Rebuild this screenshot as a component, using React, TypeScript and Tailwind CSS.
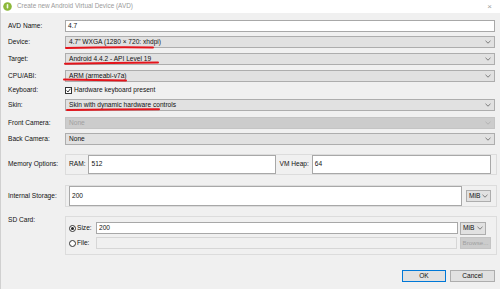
import React from 'react';

const Chevron = ({ color = '#707070' }: { color?: string }) => (
  <svg width="6" height="4" viewBox="0 0 6 4" className="shrink-0">
    <polyline points="0.5,0.8 3,3.2 5.5,0.8" fill="none" stroke={color} strokeWidth="0.9" />
  </svg>
);

function Combo({ value, disabled = false }: { value: string; disabled?: boolean }) {
  return (
    <div
      className={
        disabled
          ? 'flex-1 h-full flex items-center justify-between pl-[3px] pr-[3px] border border-[#c4c4c4] bg-[#cccccc] text-[#a0a0a0]'
          : 'flex-1 h-full flex items-center justify-between pl-[3px] pr-[3px] border border-[#adadad] bg-[#e1e1e1] text-[#111]'
      }
    >
      <span>{value}</span>
      <Chevron color={disabled ? '#b0b0b0' : '#707070'} />
    </div>
  );
}

function Field({ value, className = '' }: { value: string; className?: string }) {
  return (
    <div className={`h-full flex items-center pl-[2px] border border-[#a8a8a8] bg-white text-[#111] ${className}`}>
      {value}
    </div>
  );
}

function Row({ label, children, className = '' }: { label: string; children: React.ReactNode; className?: string }) {
  return (
    <div className={`flex items-center h-[12px] pr-[5px] ${className}`}>
      <div className="w-[64px] pl-[7px] text-[#111]">{label}</div>
      {children}
    </div>
  );
}

export default function App() {
  return (
    <div
      className="relative w-[500px] h-[289px] overflow-hidden bg-[#f0f0f0] text-[6.6px] leading-none border-l border-[#d0d0d0]"
      style={{ fontFamily: '"Liberation Sans", Arial, sans-serif' }}
    >
      {/* title bar */}
      <div className="h-[13px] bg-white flex items-center pl-[2px] pr-[8px]">
        <svg width="9" height="9" viewBox="0 0 9 9" className="shrink-0">
          <circle cx="4.5" cy="4.5" r="4.3" fill="#8cb83a" />
          <rect x="3.7" y="2" width="1.6" height="4.6" rx="0.8" fill="#f4f9e8" />
        </svg>
        <span className="ml-[5px] text-[6.4px] text-[#9a9a9a]">Create new Android Virtual Device (AVD)</span>
        <span className="ml-auto text-[8px] text-[#a0a0a0]">×</span>
      </div>

      <Row label="AVD Name:" className="mt-[7px]">
        <Field value="4.7" className="flex-1" />
      </Row>
      <Row label="Device:" className="mt-[4px]">
        <Combo value={'4.7" WXGA (1280 × 720: xhdpi)'} />
      </Row>
      <Row label="Target:" className="mt-[5px]">
        <Combo value="Android 4.4.2 - API Level 19" />
      </Row>
      <Row label="CPU/ABI:" className="mt-[5px]">
        <Combo value="ARM (armeabi-v7a)" />
      </Row>
      <div className="flex items-center h-[9px] mt-[4px]">
        <div className="w-[64px] pl-[7px] text-[#111]">Keyboard:</div>
        <div className="w-[7px] h-[7px] border border-[#333] bg-white flex items-center justify-center">
          <svg width="5" height="5" viewBox="0 0 5 5">
            <polyline points="0.6,2.5 2,4 4.4,0.8" fill="none" stroke="#222" strokeWidth="0.9" />
          </svg>
        </div>
        <span className="ml-[2px] text-[#111]">Hardware keyboard present</span>
      </div>
      <Row label="Skin:" className="mt-[4px]">
        <Combo value="Skin with dynamic hardware controls" />
      </Row>
      <Row label="Front Camera:" className="mt-[6px]">
        <Combo value="None" disabled />
      </Row>
      <Row label="Back Camera:" className="mt-[4px]">
        <Combo value="None" />
      </Row>

      {/* memory options */}
      <div className="flex items-center mt-[9px] pr-[3px]">
        <div className="w-[64px] pl-[7px] text-[#111]">Memory Options:</div>
        <div className="flex-1 h-[21px] border border-[#dcdcdc] flex items-center pl-[3px] pr-[5px]">
          <span className="text-[#111]">RAM:</span>
          <Field value="512" className="ml-[3px] w-[188px] h-[12px]" />
          <span className="ml-[3px] text-[#111]">VM Heap:</span>
          <Field value="64" className="ml-[3px] flex-1 h-[12px]" />
        </div>
      </div>

      {/* internal storage */}
      <div className="flex items-center mt-[10px] pr-[3px]">
        <div className="w-[64px] pl-[7px] text-[#111]">Internal Storage:</div>
        <div className="flex-1 h-[22px] border border-[#dcdcdc] flex items-center pl-[3px] pr-[5px] gap-[4px]">
          <Field value="200" className="flex-1 h-[12px]" />
          <div className="w-[25px] h-[12px] flex items-center justify-between px-[2px] border border-[#adadad] bg-[#e1e1e1] text-[#111]">
            <span>MiB</span>
            <Chevron />
          </div>
        </div>
      </div>

      {/* sd card */}
      <div className="flex items-start mt-[9px] pr-[3px]">
        <div className="w-[64px] pl-[7px] pt-[1px] text-[#111]">SD Card:</div>
        <div className="flex-1 h-[39px] border border-[#dcdcdc] flex flex-col justify-center gap-[3px] pl-[3px] pr-[5px]">
          <div className="flex items-center h-[12px]">
            <div className="w-[7px] h-[7px] rounded-full border border-[#333] bg-white flex items-center justify-center">
              <div className="w-[3px] h-[3px] rounded-full bg-[#222]" />
            </div>
            <span className="ml-[1px] w-[19px] text-[#111]">Size:</span>
            <Field value="200" className="flex-1 h-[12px]" />
            <div className="ml-[2px] mr-[5px] w-[26px] h-[13px] flex items-center justify-between px-[2px] border border-[#adadad] bg-[#e1e1e1] text-[#111]">
              <span>MiB</span>
              <Chevron />
            </div>
          </div>
          <div className="flex items-center h-[12px]">
            <div className="w-[7px] h-[7px] rounded-full border border-[#333] bg-white" />
            <span className="ml-[1px] w-[19px] text-[#111]">File:</span>
            <div className="flex-1 h-[12px] border border-[#d6d6d6] bg-[#f0f0f0]" />
            <div className="ml-[3px] w-[31px] h-[12px] flex items-center justify-center border border-[#c4c4c4] bg-[#cccccc] text-[#a0a0a0] text-[6.2px]">
              Browse...
            </div>
          </div>
        </div>
      </div>

      {/* buttons */}
      <div className="flex justify-end gap-[4px] mt-[15px] pr-[5px]">
        <div className="w-[44px] h-[12px] flex items-center justify-center border border-[#0078d7] bg-[#e1e1e1] text-[#111]">
          OK
        </div>
        <div className="w-[45px] h-[12px] flex items-center justify-center border border-[#adadad] bg-[#e1e1e1] text-[#111]">
          Cancel
        </div>
      </div>

      {/* hand-drawn red annotations */}
      <svg className="absolute left-0 top-0 pointer-events-none" width="500" height="289">
        <g fill="none" stroke="#e4141b" strokeWidth="2" strokeLinecap="round">
          <path d="M65 48 Q110 47 152 47.5" />
          <path d="M64 63.8 Q110 62.8 157 62.6" />
          <path d="M63 79.5 Q95 80.2 125 80.6" />
          <path d="M66 110 Q112 109.3 158 109.2" />
        </g>
      </svg>
    </div>
  );
}
